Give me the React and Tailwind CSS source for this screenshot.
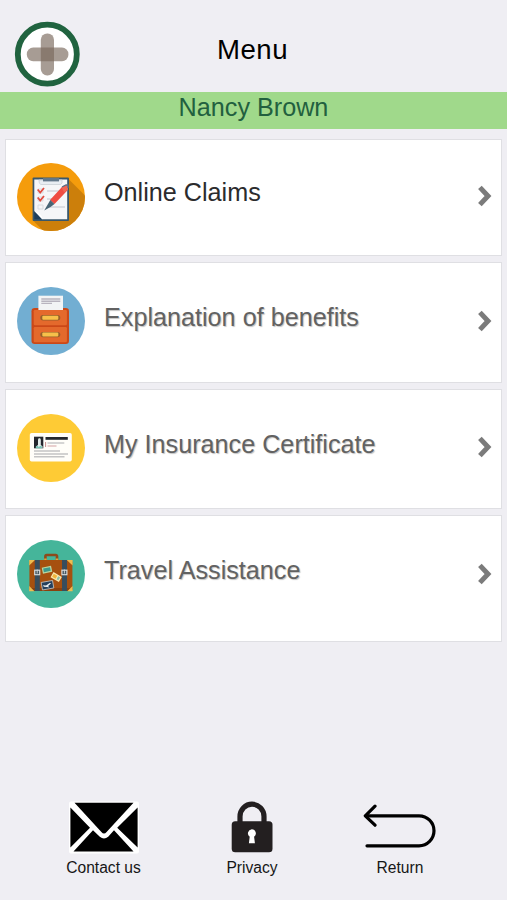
import React from "react";

function Logo() {
  return (
    <svg viewBox="0 0 66 66" className="block h-[66px] w-[66px]">
      <circle cx="33.3" cy="33.2" r="29.5" fill="#fff" stroke="#20633f" strokeWidth="5.8" />
      <rect x="26.8" y="12.4" width="13.2" height="42" rx="6.4" fill="#79695d" fillOpacity="0.66" />
      <rect x="12.8" y="26.6" width="41.6" height="13.6" rx="6.4" fill="#79695d" fillOpacity="0.66" />
    </svg>
  );
}

function ClaimsIcon() {
  return (
    <svg viewBox="0 0 68 68" className="block h-[68px] w-[68px] shrink-0">
      <defs>
        <clipPath id="claims"><circle cx="34" cy="34" r="34" /></clipPath>
      </defs>
      <g clipPath="url(#claims)">
        <rect width="68" height="68" fill="#f59c0c" />
        <path d="M51 15.5 80 44.5V92H50L16 57.5Z" fill="#cc7f0b" />
      </g>
      <rect x="15.6" y="14.6" width="36.4" height="43.4" rx="1" fill="#39576b" />
      <path d="M17.3 16.6H50.2V56.2H25L17.3 48Z" fill="#f5f6f8" />
      <path d="M17.3 48 25 56.2H17.3Z" fill="#1f3f5b" />
      <path d="M17.3 48 21 49 24.6 53 25.4 56.2Z" fill="#fff" />
      <path d="M22 17H45V20Q44 22 42 21.5H25Q22 22 22 17Z" fill="#e8edf2" stroke="#c9cfd5" strokeWidth=".8" />
      <rect x="26" y="15" width="16" height="3.4" fill="#617789" />
      <path d="M30 28H43M30 36H38M30 44H48" stroke="#d2d5da" strokeWidth="1.4" />
      <path d="M21 26H26V30H21ZM21 34H26V38H21ZM21 42H26V46H21Z" fill="none" stroke="#d9dce0" />
      <path d="m20.7 26.5 2.5 3 3.8-4.5M20.7 34.5l2.5 3 3.8-4.5" fill="none" stroke="#e34c40" strokeWidth="1.8" />
      <path d="m33 37 11.5-12.5q2-2.5 5.5-2.5l.8 5L37.5 41Z" fill="#ef4c42" />
      <path d="m44.5 24.5 3-2.3 3.2.2.2 4-3.6 3" fill="#f26654" />
      <path d="m45 24 4-2h2v3" fill="none" stroke="#58708a" strokeWidth="1.3" />
      <path d="m33.3 37 4.2 4-4 3-6.3 3.6L31 41Z" fill="#486575" />
    </svg>
  );
}

function BenefitsIcon() {
  return (
    <svg viewBox="0 0 68 68" className="block h-[68px] w-[68px] shrink-0">
      <circle cx="34" cy="34" r="34" fill="#72aed2" />
      <rect x="14.5" y="21" width="37.5" height="36" rx="3.2" fill="#cb4817" />
      <rect x="16.7" y="23" width="33.2" height="15.3" rx="1.2" fill="#e4692c" />
      <rect x="16.7" y="40" width="33.2" height="15.3" rx="1.2" fill="#e4692c" />
      <path d="M21.4 8.7H46V23H21.4Z" fill="#f2f4f5" />
      <path d="M24.3 12H43.3M24.3 14.2H43.3M24.3 16.4H35" stroke="#b8b4bf" strokeWidth="1.4" />
      {[30.7, 47.5].map((y) => (
        <g key={y}>
          <rect x="23.3" y={y - 2.6} width="20" height="5.4" rx="2.7" fill="#96602b" />
          <rect x="25.3" y={y - 1.9} width="16" height="4" rx="1" fill="#f7c04a" />
        </g>
      ))}
    </svg>
  );
}

function CertificateIcon() {
  return (
    <svg viewBox="0 0 68 68" className="block h-[68px] w-[68px] shrink-0">
      <circle cx="34" cy="34" r="34" fill="#fecb35" />
      <rect x="12.8" y="19" width="42" height="28.5" rx="1.8" fill="#fffef9" />
      <rect x="17" y="22.7" width="9.3" height="11.6" fill="#24272d" />
      <path d="M19.2 34.3v-2l1.8-1.3V26q0-1.8 1-1.8h.8q1 0 1 1.8v5l1.7 1.3v2Z" fill="#e5efed" />
      <path d="M18.8 34.3v-1.8l1.9-.8 1.2 1.5 1.2-1.5 1.9.8v1.8Z" fill="#7bc5b8" />
      <rect x="28.5" y="23" width="22.3" height="2.8" fill="#24272d" />
      <path d="M30.5 29H47.3" stroke="#c7c7c7" strokeWidth="1.5" />
      <path d="M30.5 32H39.5" stroke="#e2c0bf" strokeWidth="1.5" />
      <path d="M28.6 28v5" stroke="#c78e8e" strokeWidth="1" />
      <path d="M17 37H43M17 40H51M17 42.8H47.5" stroke="#c4c4c4" strokeWidth="1.6" />
    </svg>
  );
}

function TravelIcon() {
  return (
    <svg viewBox="0 0 68 68" className="block h-[68px] w-[68px] shrink-0">
      <circle cx="34" cy="34" r="34" fill="#45b59a" />
      <path d="M28.4 21V16.2Q28.4 15 29.7 15H38.7Q40 15 40 16.2V21" fill="none" stroke="#8d4a1c" strokeWidth="2.6" />
      <path d="M27.2 18.5h2.5V21h-2.5ZM38.7 18.5h2.5V21h-2.5Z" fill="#dfa53d" />
      <rect x="12.4" y="20" width="43" height="31" rx="2.5" fill="#a6500f" />
      <path d="M12.4 48h43v1q0 2-2.5 2h-38q-2.5 0-2.5-2Z" fill="#8b410d" />
      <path d="M12.2 20H18L12.2 25.5ZM55.6 20H49.8L55.6 25.5ZM12.2 51.2H17.5L12.2 46ZM55.6 51.2H50.3L55.6 46Z" fill="#edbd51" />
      <path d="M17.8 20h5v31h-5ZM45 20h5v31h-5Z" fill="#374d5d" />
      {[20.2, 47.4].map((x) => (
        <g key={x}>
          <rect x={x - 2.5} y="30.2" width="5" height="4.5" fill="#465863" stroke="#d6dadb" strokeWidth="1.2" />
          <path d={`M${x} 29.5v4`} stroke="#d6dadb" strokeWidth=".9" />
        </g>
      ))}
      <g transform="rotate(-12 30 29.5)">
        <rect x="25.2" y="26.7" width="9.5" height="6" fill="#b7d6a2" />
        <rect x="26.4" y="27.8" width="7" height="3.7" fill="#3c9a8c" />
      </g>
      <g transform="rotate(30 39 37)">
        <rect x="34.4" y="34" width="9.6" height="6" fill="#fbe7af" />
        <path d="M35.5 35.3h4v3.4h-4Z" fill="#efb53e" />
        <path d="M40.6 35.3h2.2v3.4h-2.2Z" fill="#8cbfac" />
      </g>
      <g transform="rotate(-10 30 45)">
        <rect x="24.7" y="41.5" width="11.5" height="7.6" fill="#24405c" stroke="#cfd5d6" strokeWidth=".7" />
        <path d="m26 44.5 3 .8 4-1.8 1.4.5-3.5 2.3 1 1.5-2.3-.8-3-.7Z" fill="#edf1f1" />
      </g>
    </svg>
  );
}

function Chevron() {
  return (
    <svg viewBox="0 0 14 22" className="block h-[22px] w-[14px] shrink-0">
      <path d="M1.9 2.4 10 11 1.9 19.6" fill="none" stroke="#7b7b7b" strokeWidth="5" />
    </svg>
  );
}

const dimmed = "pt-[15px] text-[#626262] [text-shadow:1px_1px_1px_#c4c4c4]";

const items = [
  { label: "Online Claims", Icon: ClaimsIcon, box: "h-[117px] pt-[23px]", text: "pt-[14px] text-[#2b2b2d]", arrow: "pt-[22px]" },
  { label: "Explanation of benefits", Icon: BenefitsIcon, box: "h-[121px] pt-[24px]", text: dimmed, arrow: "pt-[23px]" },
  { label: "My Insurance Certificate", Icon: CertificateIcon, box: "h-[120px] pt-[24px]", text: dimmed, arrow: "pt-[22px]" },
  { label: "Travel Assistance", Icon: TravelIcon, box: "h-[127px] pt-[24px]", text: dimmed, arrow: "pt-[23px]" },
];

function MenuCard({ label, Icon, box, text, arrow }) {
  return (
    <button className={`flex w-full items-start border border-[#dfdfe3] bg-white pl-[11px] pr-[9px] text-left ${box}`}>
      <Icon />
      <span className={`ml-[19px] flex-1 text-[25.2px] leading-[30px] whitespace-nowrap ${text}`}>{label}</span>
      <span className={arrow}><Chevron /></span>
    </button>
  );
}

function EnvelopeIcon() {
  return (
    <svg viewBox="0 0 72 54" className="block h-[54px] w-[72px]">
      <rect x="1" y=".6" width="70" height="52" rx="2" fill="#fff" />
      <path d="M6.5 1.8H65.5L38.6 31Q36 34 33.4 31Z" fill="#000" />
      <path d="M2.4 6.5 22 26.7 2.4 46.5ZM69.6 6.5 49.2 26.7 69.6 46.5Z" fill="#000" />
      <path d="M25 29.2 31.8 35.8Q36 39.4 40.2 35.8L46 29.2 65.5 50.6H5.5Z" fill="#000" />
    </svg>
  );
}

function LockIcon() {
  return (
    <svg viewBox="0 0 42 52" className="block h-[52px] w-[42px]">
      <path d="M9 23V15.5a12 12.4 0 0 1 24 0V23" fill="none" stroke="#231f20" strokeWidth="5.2" />
      <rect x=".7" y="20.3" width="40.8" height="31" rx="3.5" fill="#231f20" />
      <path d="M20.8 28.2a4.2 4.2 0 0 1 2.3 7.6l.8 6.4h-6l.8-6.4a4.2 4.2 0 0 1 2.1-7.6Z" fill="#fff" />
    </svg>
  );
}

function ReturnIcon() {
  return (
    <svg viewBox="0 0 76 46" className="block h-[46px] w-[76px]" fill="none" stroke="#000" strokeWidth="3.2" strokeLinecap="round" strokeLinejoin="round">
      <path d="M4 11.8H57a15 15 0 0 1 0 30H5" />
      <path d="M13 2.2 3.3 11.8 13 21.2" />
    </svg>
  );
}

export default function App() {
  return (
    <div className="flex h-[900px] w-[507px] flex-col overflow-hidden bg-[#efeef3] font-['Liberation_Sans',Arial,sans-serif]">
      <header className="grid h-[92px] grid-cols-[95px_1fr_97px]">
        <div className="pl-[14px] pt-[21px]"><Logo /></div>
        <h1 className="pt-[34px] text-center text-[27.6px] leading-[32px] tracking-[0.5px] text-black">Menu</h1>
      </header>
      <div className="h-[37px] shrink-0 bg-[#a0d98b] text-center text-[25.2px] leading-[30px] text-[#22603f]">Nancy Brown</div>
      <main className="flex flex-col gap-[6px] pl-[5px] pr-[5px] pt-[10px]">
        {items.map((item) => <MenuCard key={item.label} {...item} />)}
      </main>
      <footer className="mt-auto flex h-[99px] shrink-0 pl-[29px] pr-[33px] text-[15.6px] leading-[18px] text-[#161616]">
        <div className="flex w-[149px] flex-col items-center">
          <div className="h-[58px]"><EnvelopeIcon /></div>
          <span>Contact us</span>
        </div>
        <div className="flex w-[148px] flex-col items-center">
          <div className="h-[58px]"><LockIcon /></div>
          <span>Privacy</span>
        </div>
        <div className="flex w-[148px] flex-col items-center">
          <div className="h-[58px] pt-[3px]"><ReturnIcon /></div>
          <span>Return</span>
        </div>
      </footer>
    </div>
  );
}
